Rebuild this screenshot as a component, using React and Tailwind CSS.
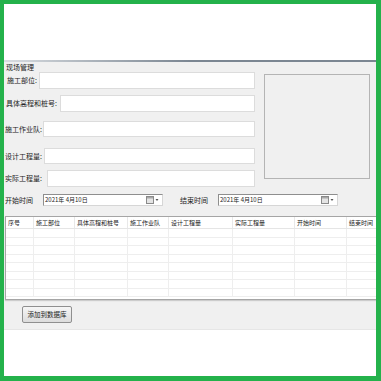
import React from 'react';

const font = { fontFamily: '"Noto Sans CJK SC", "Noto Sans", sans-serif' };

const fields = [
  { label: '施工部位:', pl: 'pl-[3px]', lw: 'w-[32px]', h: 'h-[17px]', mt: 'mt-0' },
  { label: '具体高程和桩号:', pl: 'pl-[2px]', lw: 'w-[54px]', h: 'h-[17px]', mt: 'mt-[6px]' },
  { label: '施工作业队:', pl: 'pl-[1px]', lw: 'w-[38px]', h: 'h-[16px]', mt: 'mt-[9px]' },
  { label: '设计工程量:', pl: 'pl-[1px]', lw: 'w-[39px]', h: 'h-[16px]', mt: 'mt-[11px]' },
  { label: '实际工程量:', pl: 'pl-[1px]', lw: 'w-[42px]', h: 'h-[17px]', mt: 'mt-[6px]' },
];

const columns = [
  { name: '序号', w: 'w-[28px]' },
  { name: '施工部位', w: 'w-[41px]' },
  { name: '具体高程和桩号', w: 'w-[53px]' },
  { name: '施工作业队', w: 'w-[41px]' },
  { name: '设计工程量', w: 'w-[64px]' },
  { name: '实际工程量', w: 'w-[62px]' },
  { name: '开始时间', w: 'w-[52px]' },
  { name: '结束时间', w: 'w-[60px]' },
];

const CalendarIcon = () => (
  <svg width="13" height="8" viewBox="0 0 13 8">
    <rect x="0.5" y="0.5" width="7" height="7" fill="#e4e4e4" stroke="#8a8a8a" />
    <rect x="1" y="1" width="6" height="1.5" fill="#a8a8a8" />
    <path d="M9.5 3 L12.5 3 L11 5 Z" fill="#555" />
  </svg>
);

const DateBox = () => (
  <div className="flex items-center justify-between w-[120px] h-[12px] bg-white border border-[#8e8e8e] border-b-[#d6d6d6] border-r-[#d6d6d6] pl-[1px] pr-[3px]">
    <span className="text-[6px] leading-none text-[#222]">2021年 4月10日</span>
    <CalendarIcon />
  </div>
);

const App = () => {
  return (
    <div className="w-[381px] h-[381px] bg-[#24b24b] pt-[4px] pl-[4px] pr-[5px] pb-[5px]" style={font}>
      <div className="w-full h-full bg-white flex flex-col">
        <div className="h-[56px] bg-white" />
        <div className="h-[2px] bg-gradient-to-r from-[#d9dde1] via-[#7b8692] to-[#7b8692]" />

        <div className="h-[267px] bg-[#f0f0f0] flex flex-col text-[#222] overflow-hidden">
          <div className="h-[10px] leading-[10px] text-[7px] pl-[2px]">现场管理</div>

          <div className="flex">
            <div className="w-[251px] flex flex-col">
              {fields.map((f) => (
                <div key={f.label} className={`flex items-center ${f.mt} ${f.pl}`}>
                  <span className={`${f.lw} text-[7px] leading-none whitespace-nowrap`}>{f.label}</span>
                  <div className={`flex-1 ${f.h} bg-white border border-[#dcdcdc]`} />
                </div>
              ))}
            </div>
            <div className="ml-[9px] mt-[2px] w-[106px] h-[105px] bg-[#f0f0f0] border border-[#b4b4b4]" />
          </div>

          <div className="flex items-center mt-[7px] h-[12px] pl-[1px]">
            <span className="w-[38px] text-[7px] leading-none">开始时间</span>
            <DateBox />
            <span className="ml-[17px] w-[38px] text-[7px] leading-none">结束时间</span>
            <DateBox />
          </div>

          <div className="mt-[10px] ml-[1px] w-[400px] shrink-0 h-[84px] border border-[#a5a5a5] bg-white overflow-hidden flex flex-col shadow-[0_1px_1px_rgba(0,0,0,0.15)]">
            <div className="flex h-[12px] shrink-0 bg-white border-b border-[#e5e5e5]">
              {columns.map((c) => (
                <div key={c.name} className={`${c.w} shrink-0 border-r border-[#e8e8e8] pl-[2px] text-[6px] leading-[12px] whitespace-nowrap`}>
                  {c.name}
                </div>
              ))}
            </div>
            {Array.from({ length: 8 }).map((_, i) => (
              <div key={i} className="flex h-[8.5px] shrink-0 border-b border-[#eeeeee]">
                {columns.map((c) => (
                  <div key={c.name} className={`${c.w} shrink-0 border-r border-[#eeeeee]`} />
                ))}
              </div>
            ))}
          </div>

          <div className="flex mt-[6px] ml-[18px]">
            <button className="flex items-center justify-center w-[50px] h-[17px] rounded-[2px] border border-[#8f8f8f] bg-gradient-to-b from-[#f6f6f6] to-[#dcdcdc] text-[6.5px] leading-none text-[#222]">
              添加到数据库
            </button>
          </div>
        </div>

        <div className="flex-1 bg-white border-t border-[#e6e6e6]" />
      </div>
    </div>
  );
};

export default App;
